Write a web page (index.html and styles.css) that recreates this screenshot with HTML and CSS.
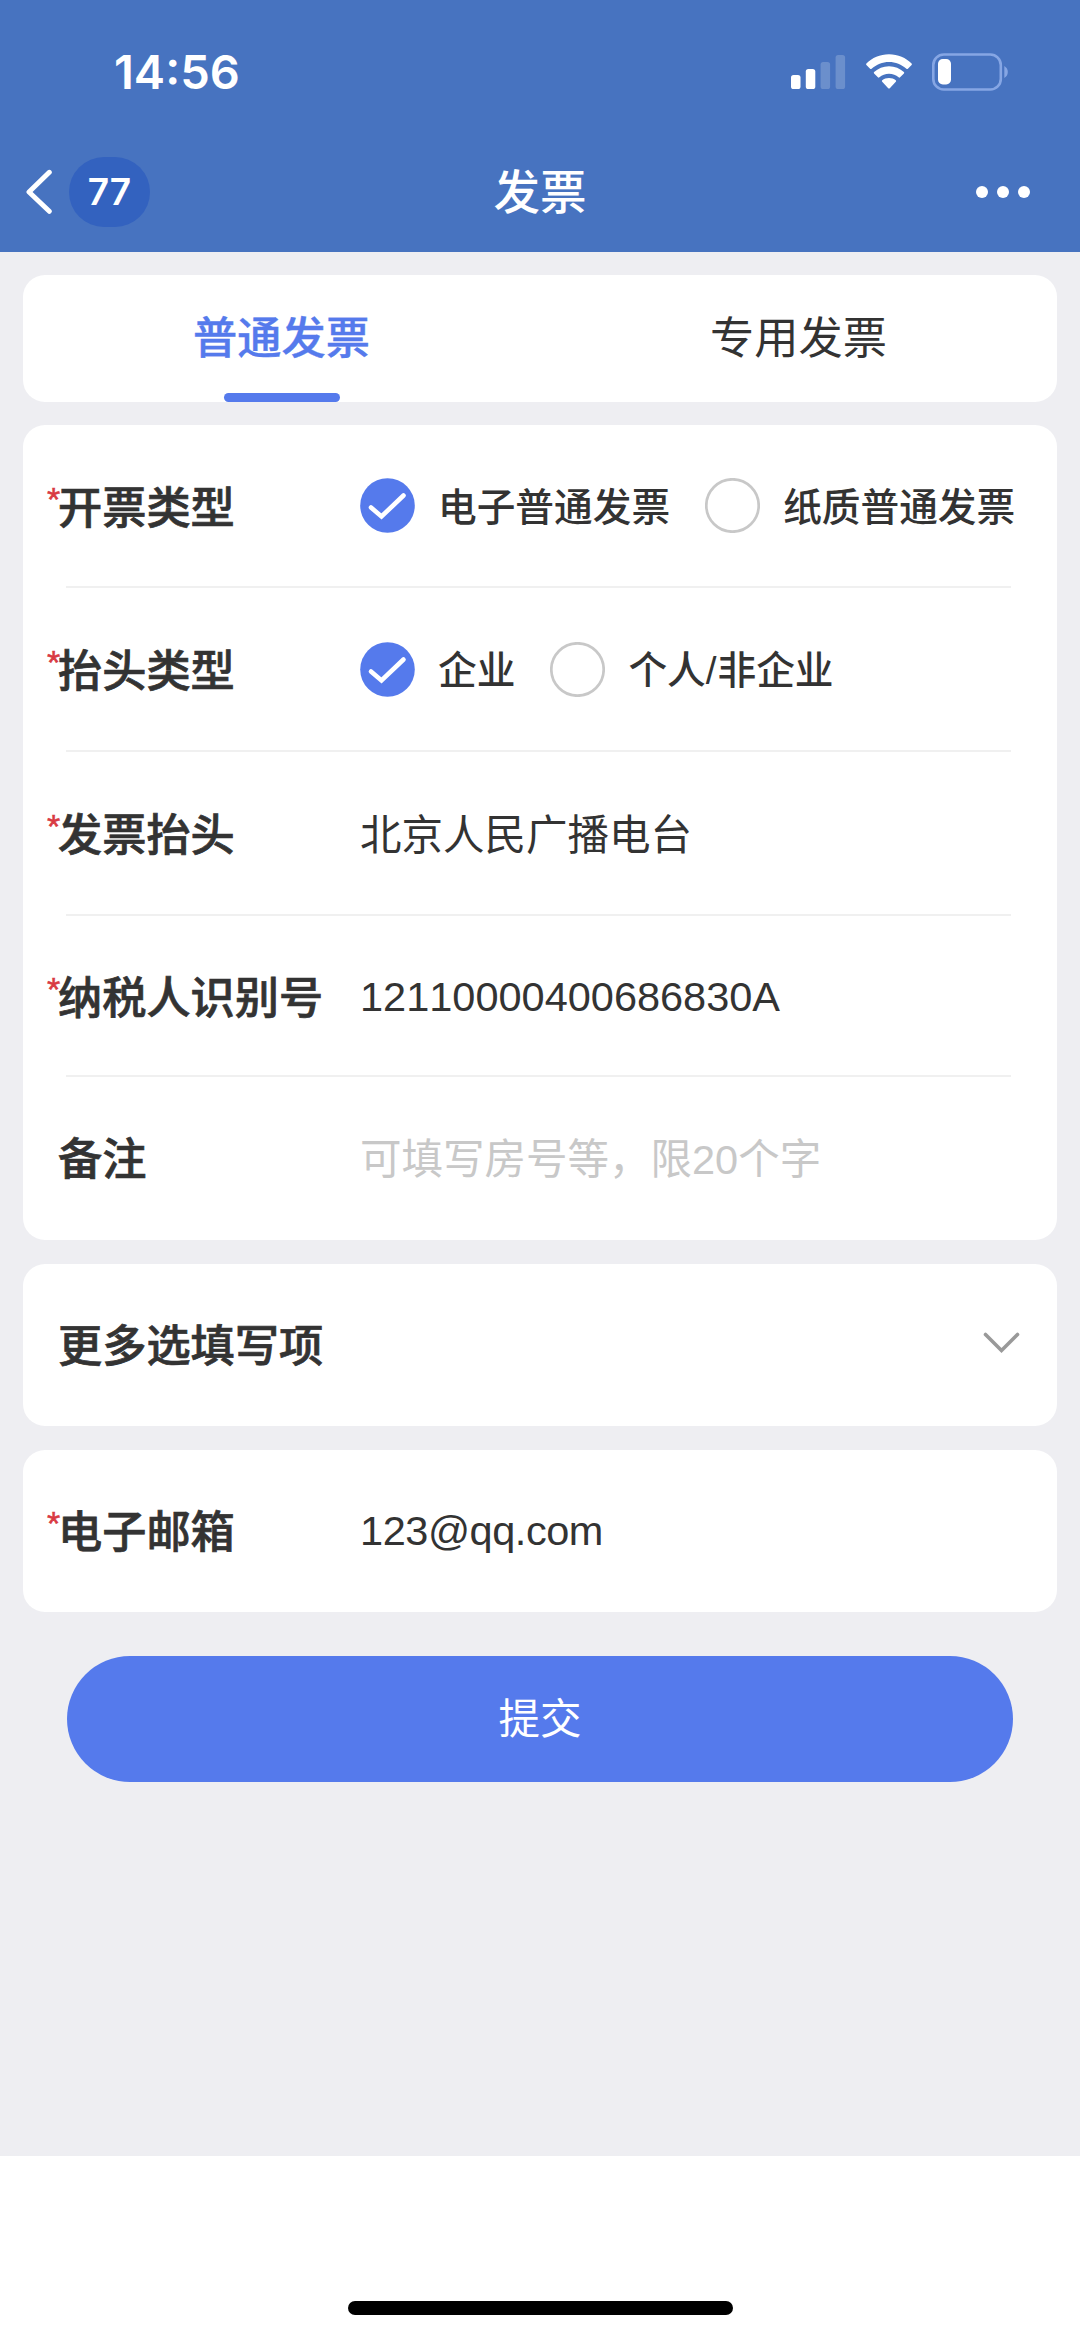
FILE: index.html
```html
<!DOCTYPE html>
<html lang="zh-CN">
<head>
<meta charset="utf-8">
<title>发票</title>
<link rel="stylesheet" href="styles.css">
</head>
<body>
<header class="header">
  <div class="status">
    <span class="time">14:56</span>
    <div class="status-icons">
      <svg class="signal" width="55" height="34" viewBox="0 0 55 34" fill="#fff">
        <rect x="0" y="20" width="9.5" height="14" rx="2.6"/>
        <rect x="14.8" y="14" width="9.5" height="20" rx="2.6"/>
        <rect x="29.6" y="7" width="9.5" height="27" rx="2.6" opacity=".2"/>
        <rect x="44.6" y="0" width="9.5" height="34" rx="2.6" opacity=".2"/>
      </svg>
      <svg class="wifi" width="48" height="36" viewBox="0 0 48 36" fill="#fff">
        <path d="M24 0.3C33 0.3 41 4 46.6 9.4Q47.3 10.2 46.6 10.9L42.9 14.7Q42.2 15.4 41.4 14.7C36.600 10.4 30.5 7.900 24 7.900C17.500 7.900 11.400 10.400 6.600 14.700Q5.800 15.400 5.100 14.700L1.400 10.900Q.7 10.200 1.400 9.400C7 4 15 .3 24 .3Z"/>
        <path d="M24 12.300C29.800 12.300 35 14.500 38.900 18.100Q39.600 18.900 38.900 19.600L35.100 23.300Q34.400 24 33.600 23.300C31 21.100 27.700 19.700 24 19.700C20.300 19.700 17 21.100 14.400 23.300Q13.600 24 12.900 23.300L9.100 19.600Q8.400 18.900 9.100 18.100C13 14.500 18.200 12.300 24 12.300Z"/>
        <path d="M24 24C26.700 24 29 24.900 30.800 26.300Q31.600 27 30.800 27.800L24.800 34.200Q24 35 23.200 34.200L17.200 27.800Q16.400 27 17.200 26.300C19 24.900 21.300 24 24 24Z"/>
      </svg>
      <svg class="battery" width="77" height="38" viewBox="0 0 77 38">
        <rect x="1.300" y="1.500" width="67.500" height="35" rx="10.500" fill="none" stroke="#86a6e4" stroke-width="2.600"/>
        <rect x="6" y="6" width="13" height="25.500" rx="4.800" fill="#fff"/>
        <path d="M72.300 13C77 15.500 77 22.500 72.300 25Z" fill="#86a6e4"/>
      </svg>
    </div>
  </div>
  <nav class="navbar">
    <div class="nav-left">
      <svg class="back" width="28" height="46" viewBox="0 0 28 46" fill="none" stroke="#fff" stroke-width="5" stroke-linecap="round" stroke-linejoin="round"><path d="M24.300 3.300 4 23 24.300 42.300"/></svg>
      <span class="badge">77</span>
    </div>
    <h1 class="title">发票</h1>
    <div class="dots"><i></i><i></i><i></i></div>
  </nav>
</header>

<main class="page">
  <div class="card tabs">
    <div class="tab tab-active">普通发票</div>
    <div class="tab">专用发票</div>
  </div>

  <section class="card form">
    <div class="row">
      <span class="star">*</span><span class="label">开票类型</span>
      <div class="options">
        <span class="option"><svg class="radio" viewBox="0 0 55 55"><circle cx="27.500" cy="27.500" r="27.300" fill="#557aec"/><path d="M11 29.500 21.500 38.500 43.500 17.500" fill="none" stroke="#fff" stroke-width="4.600" stroke-linecap="round"/></svg><span class="option-text">电子普通发票</span></span>
        <span class="option"><svg class="radio" viewBox="0 0 55 55"><circle cx="27.500" cy="27.500" r="26.200" fill="#fff" stroke="#c8c8c8" stroke-width="2.700"/></svg><span class="option-text">纸质普通发票</span></span>
      </div>
    </div>
    <div class="row">
      <span class="star">*</span><span class="label">抬头类型</span>
      <div class="options">
        <span class="option"><svg class="radio" viewBox="0 0 55 55"><circle cx="27.500" cy="27.500" r="27.300" fill="#557aec"/><path d="M11 29.500 21.500 38.500 43.500 17.500" fill="none" stroke="#fff" stroke-width="4.600" stroke-linecap="round"/></svg><span class="option-text">企业</span></span>
        <span class="option"><svg class="radio" viewBox="0 0 55 55"><circle cx="27.500" cy="27.500" r="26.200" fill="#fff" stroke="#c8c8c8" stroke-width="2.700"/></svg><span class="option-text">个人<span class="slash">/</span>非企业</span></span>
      </div>
    </div>
    <div class="row">
      <span class="star">*</span><span class="label">发票抬头</span>
      <span class="value value-cjk">北京人民广播电台</span>
    </div>
    <div class="row row-tax">
      <span class="star">*</span><span class="label">纳税人识别号</span>
      <span class="value">12110000400686830A</span>
    </div>
    <div class="row">
      <span class="star"></span><span class="label">备注</span>
      <span class="value value-cjk placeholder">可填写房号等，限20个字</span>
    </div>
  </section>

  <section class="card more">
    <span class="label">更多选填写项</span>
    <svg class="chevron" width="37" height="22" viewBox="0 0 37 22" fill="none" stroke="#999" stroke-width="3.600" stroke-linecap="round"><path d="M2.500 2.500 18.500 18.500 34.500 2.500"/></svg>
  </section>

  <section class="card email">
    <div class="row">
      <span class="star">*</span><span class="label">电子邮箱</span>
      <span class="value value-email">123@qq.com</span>
    </div>
  </section>

  <button class="submit">提交</button>
</main>

<footer class="footer"><div class="home-indicator"></div></footer>
</body>
</html>
```
FILE: styles.css
```css
* { box-sizing: border-box; }

body {
  margin: 0;
  width: 1080px;
  height: 2337px;
  display: flex;
  flex-direction: column;
  background: #fff;
  color: #333;
  font-family: "Liberation Sans", "Noto Sans CJK SC", sans-serif;
  font-kerning: none;
}

.header {
  height: 252px;
  background: #4773c0;
  color: #fff;
}

.status {
  height: 144px;
  padding: 0 71px 0 114px;
  display: flex;
  align-items: center;
  justify-content: space-between;
}

.time { font: 600 47px/56px Inter, sans-serif; }

.status-icons { display: flex; align-items: center; }
.wifi { margin-left: 19px; }
.battery { margin-left: 19px; }

.navbar {
  height: 96px;
  padding: 0 50px 0 25px;
  display: grid;
  grid-template-columns: 1fr auto 1fr;
  align-items: center;
}

.nav-left { display: flex; align-items: center; }

.badge {
  width: 81px;
  height: 70px;
  margin-left: 16px;
  border-radius: 35px;
  background: #3362bf;
  text-align: center;
  font: 600 37px/70px Inter, sans-serif;
}

.title {
  margin: 0 0 0 25px;
  padding-bottom: 6px;
  font: 500 46.500px/64px "Noto Sans CJK SC", sans-serif;
}

.dots {
  display: flex;
  justify-content: flex-end;
  gap: 9px;
}

.dots i {
  width: 12px;
  height: 12px;
  border-radius: 50%;
  background: #fff;
}

.page {
  height: 1904px;
  padding: 23px 23px 0;
  background: #eeeef2;
}

.card {
  border-radius: 22px;
  background: #fff;
}

.tabs { height: 127px; display: flex; }

.tab {
  flex: 1;
  display: flex;
  flex-direction: column;
  align-items: center;
  font: 400 44.200px/121px "Noto Sans CJK SC", sans-serif;
}

.tab-active {
  color: #557aec;
  font-weight: 500;
  -webkit-text-stroke: 0.4px;
}

.tab-active::after {
  content: "";
  width: 116px;
  height: 9px;
  margin-top: -3px;
  border-radius: 5px;
  background: #557aec;
}

.form { margin-top: 23px; height: 815px; }

.row {
  height: 164px;
  padding-left: 24px;
  display: flex;
  align-items: center;
  background: linear-gradient(#f0f0f0, #f0f0f0) 43px 100% / 945px 2px no-repeat;
}

.form .row:first-child { height: 163px; }
.form .row-tax { height: 161px; }
.row:last-child { height: 162px; background: none; }

.star {
  width: 11px;
  height: 56px;
  color: #d93a43;
  font: 400 34px/40px "Liberation Sans", sans-serif;
  -webkit-text-stroke: 0.5px;
}

.label {
  width: 302px;
  padding-bottom: 4px;
  font: 500 44.200px/64px "Noto Sans CJK SC", sans-serif;
  -webkit-text-stroke: 0.7px;
}

.options { display: flex; gap: 35px; padding-bottom: 2px; }

.option {
  display: flex;
  align-items: center;
  font-size: 38.700px;
  font-weight: 500;
  line-height: 56px;
  white-space: nowrap;
}

.option-text { padding-top: 4px; }
.slash { margin-right: 1px; }

.radio { width: 55px; height: 55px; margin-right: 23px; }

.value { font-size: 41.500px; line-height: 60px; }
.value-cjk { padding-top: 4px; }
.value-email { letter-spacing: -0.450px; }
.placeholder { color: #c8c8c8; }

.more {
  height: 162px;
  margin-top: 24px;
  padding: 0 37px 0 35px;
  display: flex;
  align-items: center;
  justify-content: space-between;
}

.chevron { margin-bottom: 4px; }

.email { height: 162px; margin-top: 24px; }

.submit {
  display: block;
  width: 946px;
  height: 126px;
  margin: 44px auto 0;
  padding: 0 0 6px;
  border: 0;
  border-radius: 63px;
  background: #557aec;
  color: #fff;
  font: 400 41.500px/120px "Noto Sans CJK SC", sans-serif;
}

.footer {
  flex: 1;
  display: flex;
  justify-content: center;
  align-items: flex-end;
  padding-bottom: 22px;
}

.home-indicator {
  width: 385px;
  height: 14px;
  border-radius: 7px;
  background: #000;
}
```
